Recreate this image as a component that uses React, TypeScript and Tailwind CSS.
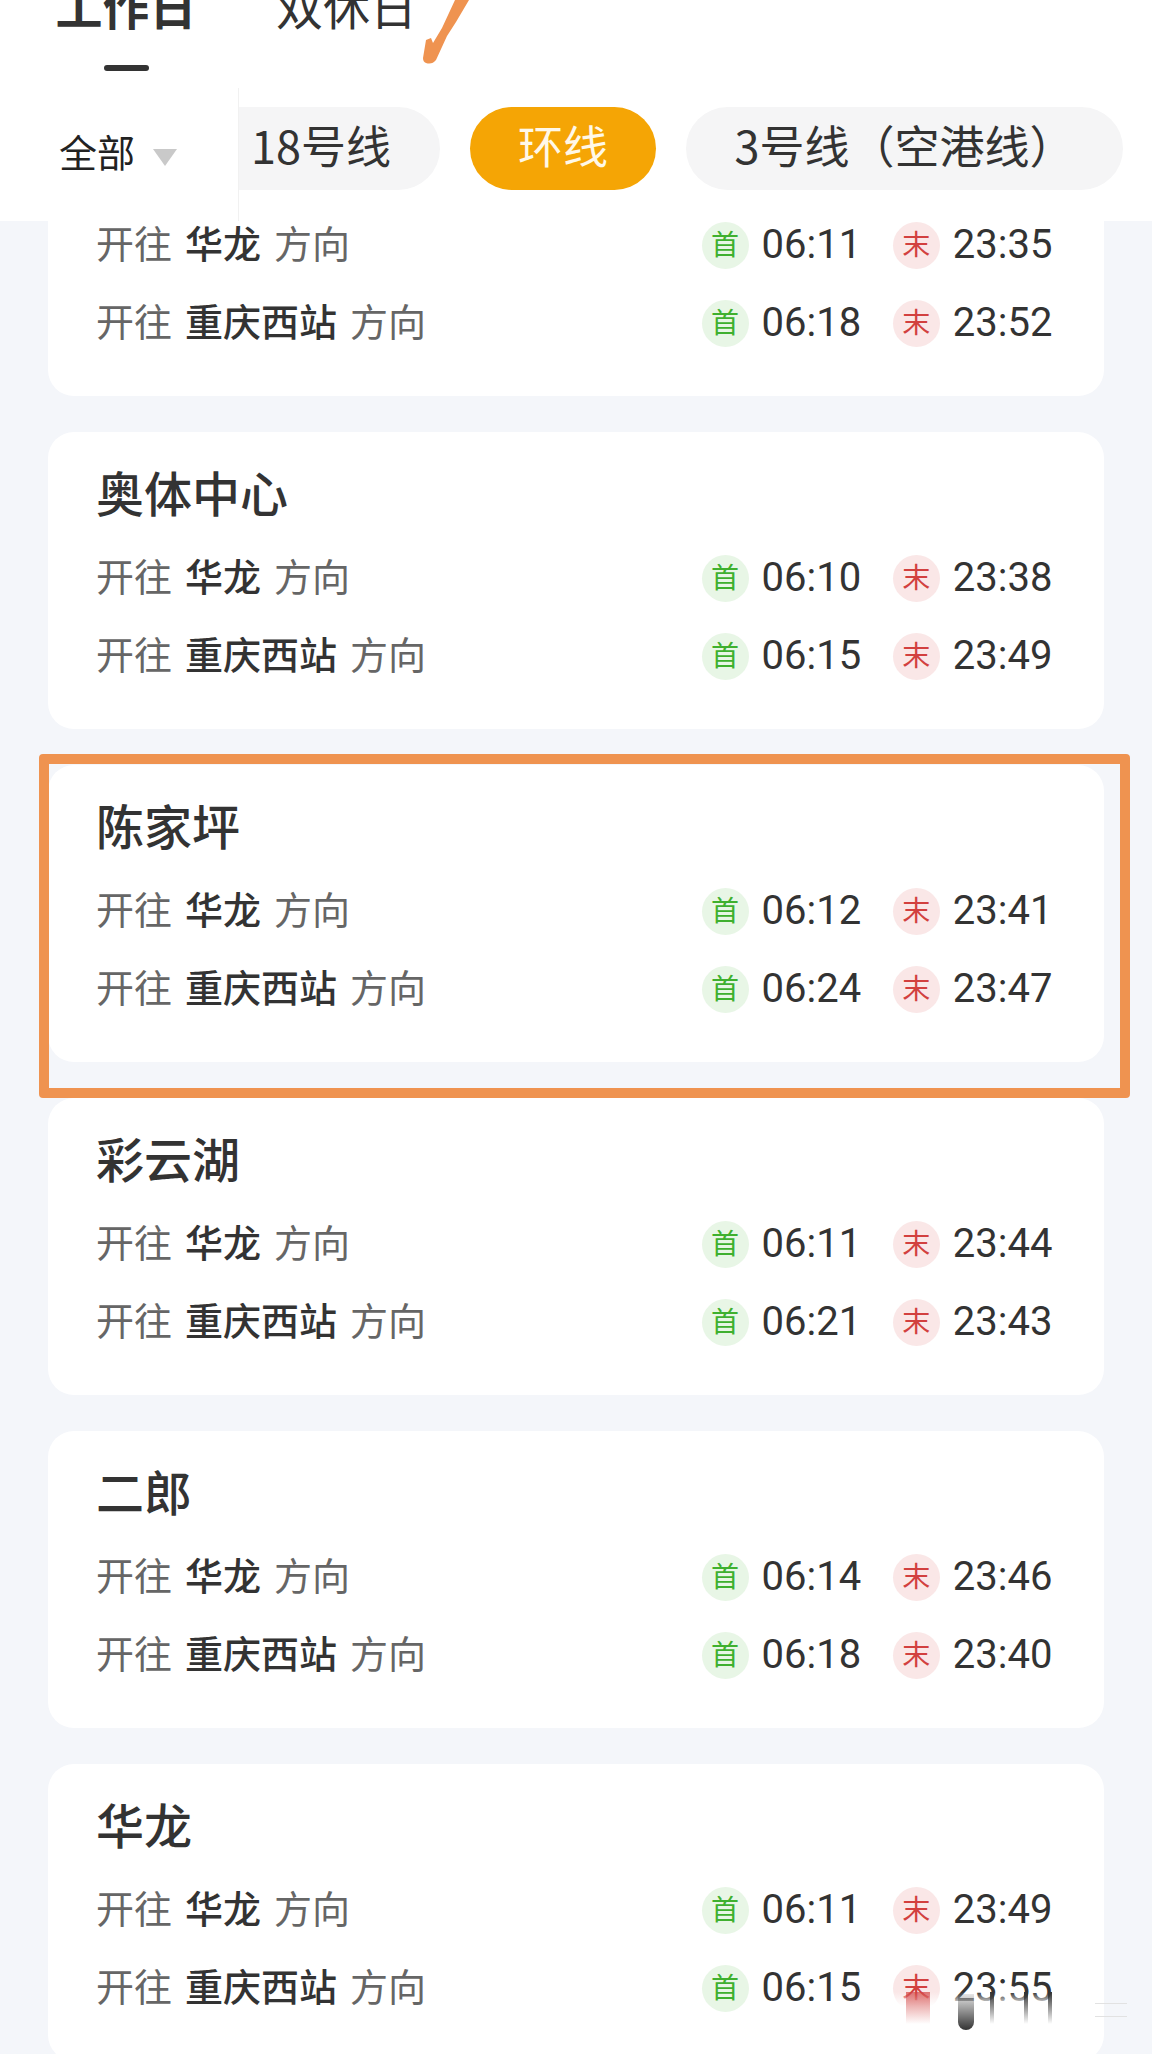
const font = { fontFamily: '"Noto Sans CJK SC", sans-serif' };

const stations = [
  { name: '', times: ['06:11', '23:35', '06:18', '23:52'] },
  { name: '奥体中心', times: ['06:10', '23:38', '06:15', '23:49'] },
  { name: '陈家坪', times: ['06:12', '23:41', '06:24', '23:47'] },
  { name: '彩云湖', times: ['06:11', '23:44', '06:21', '23:43'] },
  { name: '二郎', times: ['06:14', '23:46', '06:18', '23:40'] },
  { name: '华龙', times: ['06:11', '23:49', '06:15', '23:55'] },
];

function Time({ kind, time }: { kind: 'first' | 'last'; time: string }) {
  return (
    <div className="flex w-[192px] items-center gap-[13px]">
      <div
        className={
          kind === 'first'
            ? 'flex size-[47px] shrink-0 items-center justify-center rounded-full bg-[#e8f6e6] pb-[4px] text-[28px] leading-none text-[#3fb02f]'
            : 'flex size-[47px] shrink-0 items-center justify-center rounded-full bg-[#fae7e7] pb-[4px] text-[28px] leading-none text-[#d2403f]'
        }
      >
        {kind === 'first' ? '首' : '末'}
      </div>
      <span className="font-['Roboto'] text-[40px] leading-none text-[#333]">{time}</span>
    </div>
  );
}

function Direction({ to, first, last }: { to: string; first: string; last: string }) {
  return (
    <div className="flex h-[78px] items-center">
      <div className="w-[608px] pb-[7px] text-[38px] leading-none text-[#666]">
        开往<span className="mx-[13px] font-medium text-[#333]">{to}</span>方向
      </div>
      <Time kind="first" time={first} />
      <Time kind="last" time={last} />
    </div>
  );
}

function StationCard({ name, times }: { name: string; times: string[] }) {
  return (
    <section className="rounded-[26px] bg-white pt-[29px] pr-[20px] pb-[34px] pl-[48px]">
      <h2 className="mb-[18px] h-[60px] text-[48px] leading-[60px] font-medium text-[#333]">{name}</h2>
      <Direction to="华龙" first={times[0]} last={times[1]} />
      <Direction to="重庆西站" first={times[2]} last={times[3]} />
    </section>
  );
}

export default function App() {
  return (
    <div className="relative h-[2054px] w-[1152px] overflow-hidden bg-[#f4f6fa]" style={font}>
      <header className="relative z-10 h-[221px] overflow-hidden bg-white">
        <div className="flex h-[88px] gap-[79px] pl-[55px]">
          <div className="flex w-[142px] flex-col items-center">
            <div className="-mt-[19px] text-[47px] leading-[48px] font-bold text-[#333]">工作日</div>
            <div className="mt-[36px] h-[6px] w-[45px] rounded-full bg-[#333]" />
          </div>
          <div className="-mt-[19px] h-[48px] text-[47px] leading-[48px] text-[#333]">双休日</div>
        </div>

        <svg className="absolute top-0 left-[420px]" width="52" height="66" viewBox="0 0 52 66">
          <path
            d="M35 0H49L36 22L27 36L16 60Q12 65 6 63Q3 62 3 58L6 40L11 38L13 43L22 28Z"
            fill="#ef9350"
          />
        </svg>

        <div className="flex h-[133px]">
          <div className="flex w-[239px] shrink-0 items-center border-r border-[#f1f1f1] pb-[8px] pl-[59px]">
            <span className="text-[38px] leading-none text-[#222]">全部</span>
            <svg className="mt-[14px] ml-[18px]" width="24" height="17" viewBox="0 0 24 17">
              <path d="M0 0H24L12 17Z" fill="#c9c9c9" />
            </svg>
          </div>
          <div className="mt-[19px] flex h-[83px] text-[45px] leading-none text-[#333]">
            <div className="flex w-[201px] items-center rounded-r-full bg-[#f5f5f6] pb-[8px] pl-[12px]">18号线</div>
            <div className="ml-[30px] flex w-[186px] items-center justify-center rounded-full bg-[#f5a505] pb-[8px] text-[#fff8e8]">环线</div>
            <div className="ml-[30px] flex w-[437px] items-center justify-center rounded-full bg-[#f5f5f6] pb-[8px]">3号线（空港线）</div>
          </div>
        </div>
      </header>

      <main className="-mt-[122px] flex flex-col gap-[36px] px-[48px]">
        {stations.map((s) => (
          <StationCard key={s.times.join()} name={s.name} times={s.times} />
        ))}
      </main>

      {/* highlight frame drawn on the screenshot */}
      <div className="absolute top-[754px] left-[39px] h-[344px] w-[1091px] rounded-[4px] border-[10px] border-[#ef9350]" />

      {/* smeared watermark over the last row */}
      <div className="absolute top-[1992px] left-[880px] h-[40px] w-[224px] bg-gradient-to-b from-white/0 to-white to-35%" />
      <div className="absolute top-[1992px] left-[906px] h-[32px] w-[24px] bg-gradient-to-b from-[#d2403f]/70 to-[#d2403f]/0" />
      <div className="absolute top-[1994px] left-[958px] h-[36px] w-[16px] rounded-b-full bg-gradient-to-b from-black/10 to-black/80" />
      <div className="absolute top-[1992px] left-[990px] h-[32px] w-[4px] bg-gradient-to-b from-[#333] to-[#333]/0" />
      <div className="absolute top-[1992px] left-[1024px] h-[32px] w-[4px] bg-gradient-to-b from-[#333] to-[#333]/0" />
      <div className="absolute top-[1992px] left-[1048px] h-[32px] w-[4px] bg-gradient-to-b from-[#333] to-[#333]/0" />
      <div className="absolute top-[2003px] left-[1095px] h-[1px] w-[32px] bg-[#e2e2e2]" />
      <div className="absolute top-[2016px] left-[1095px] h-[1px] w-[32px] bg-[#e2e2e2]" />
    </div>
  );
}
